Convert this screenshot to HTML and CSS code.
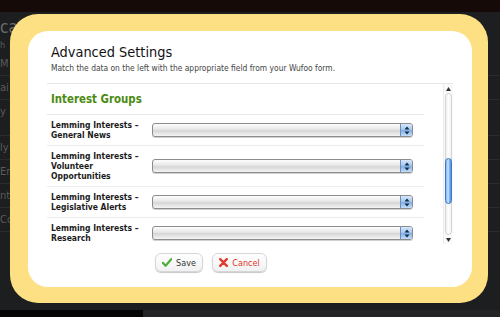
FILE: index.html
```html
<html>
    <head>
        <meta name="viewport" content="width=device-width, initial-scale=1">
        <link rel="stylesheet" href="styles.css">
    </head>

    <body>
        <div class="topbar"></div>
        <div class="page">
            <div class="page-title">cat</div>
            <div class="page-sub">h</div>
            <div class="page-row">M</div>
            <div class="page-row">ai</div>
            <div class="page-row tall">y</div>
            <div class="page-row">ly</div>
            <div class="page-row">En</div>
            <div class="page-row">nt</div>
            <div class="page-row">Co</div>
        </div>
        <div class="footbar"><div class="footbar-black"></div></div>

        <div class="modal">
            <div class="panel">
                <div class="header">
                    <h3>Advanced Settings</h3>
                    <p>Match the data on the left with the appropriate field from your Wufoo form.</p>
                </div>

                <div class="listbox">
                    <div class="list">
                        <div class="group">Interest Groups</div>

                        <div class="row">
                            <label>Lemming Interests &ndash;<br />General News</label>
                            <div class="select"><span class="arrows"><svg width="6" height="9" viewBox="0 0 6 9"><path d="M3 0.5 L5.5 3.5 H0.5 Z M3 8.5 L5.5 5.5 H0.5 Z" fill="#1a2a40"/></svg></span></div>
                        </div>
                        <div class="row">
                            <label>Lemming Interests &ndash;<br />Volunteer<br />Opportunities</label>
                            <div class="select"><span class="arrows"><svg width="6" height="9" viewBox="0 0 6 9"><path d="M3 0.5 L5.5 3.5 H0.5 Z M3 8.5 L5.5 5.5 H0.5 Z" fill="#1a2a40"/></svg></span></div>
                        </div>
                        <div class="row">
                            <label>Lemming Interests &ndash;<br />Legislative Alerts</label>
                            <div class="select"><span class="arrows"><svg width="6" height="9" viewBox="0 0 6 9"><path d="M3 0.5 L5.5 3.5 H0.5 Z M3 8.5 L5.5 5.5 H0.5 Z" fill="#1a2a40"/></svg></span></div>
                        </div>
                        <div class="row">
                            <label>Lemming Interests &ndash;<br />Research</label>
                            <div class="select"><span class="arrows"><svg width="6" height="9" viewBox="0 0 6 9"><path d="M3 0.5 L5.5 3.5 H0.5 Z M3 8.5 L5.5 5.5 H0.5 Z" fill="#1a2a40"/></svg></span></div>
                        </div>
                    </div>

                    <div class="scrollbar">
                        <div class="sb-arrow"><svg width="5" height="4" viewBox="0 0 5 4"><path d="M2.5 0 L5 4 H0 Z" fill="#333"/></svg></div>
                        <div class="sb-track">
                            <div class="sb-thumb"></div>
                        </div>
                        <div class="sb-arrow"><svg width="5" height="4" viewBox="0 0 5 4"><path d="M2.5 4 L5 0 H0 Z" fill="#333"/></svg></div>
                    </div>
                </div>

                <div class="buttons">
                    <button class="btn save">
                        <svg width="10" height="9" viewBox="0 0 10 9"><path d="M0.8 4.8 L3.6 7.8 L9.2 1.2" fill="none" stroke="#4fae3a" stroke-width="2.2" stroke-linecap="round" stroke-linejoin="round"/></svg>
                        Save
                    </button>
                    <button class="btn cancel">
                        <svg width="9" height="9" viewBox="0 0 9 9"><path d="M1.2 1.2 L7.8 7.8 M7.8 1.2 L1.2 7.8" fill="none" stroke="#e23a30" stroke-width="2.4" stroke-linecap="round"/></svg>
                        Cancel
                    </button>
                </div>
            </div>
        </div>
    </body>
</html>
```

FILE: styles.css
```css
* {
  box-sizing: border-box;
}

body {
  margin: 0;
  width: 500px;
  height: 317px;
  overflow: hidden;
  background-color: #1d1e1f;
  font-family: "DejaVu Sans Condensed", "DejaVu Sans", sans-serif;
  font-stretch: condensed;
  position: relative;
}

.topbar {
  height: 12px;
  background-color: #150a08;
}

/* page behind the overlay */
.page {
  color: #5a5a5a;
  font-size: 11px;
}

.page-title {
  font-size: 17px;
  line-height: 22px;
  margin-top: 4px;
  color: #6b6b6b;
}

.page-sub {
  font-size: 9px;
  line-height: 14px;
}

.page-row {
  height: 24px;
  line-height: 24px;
  border-bottom: 1px solid #2a2b2c;
}

.page-row.tall {
  height: 36px;
}

.footbar {
  position: absolute;
  left: 0;
  right: 0;
  bottom: 0;
  height: 7px;
  background-color: #232425;
}

.footbar-black {
  width: 143px;
  height: 7px;
  background-color: #050505;
}

/* modal */
.modal {
  position: absolute;
  left: 10px;
  top: 14px;
  width: 478px;
  height: 289px;
  padding: 17px 16px 16px 18px;
  background-color: #fde083;
  border-radius: 28px;
}

.panel {
  height: 100%;
  background-color: #fff;
  border-radius: 20px;
  padding: 12px 0 0 19px;
}

.header {
  padding-left: 4px;
  height: 40px;
}

.header h3 {
  margin: 0;
  font-size: 14.4px;
  line-height: 18px;
  font-weight: normal;
  color: #111;
}

.header p {
  margin: 2px 0 0 0;
  font-size: 8.4px;
  line-height: 10px;
  color: #444;
}

.listbox {
  width: 406px;
  height: 161px;
  border-top: 1px solid #e6e6e6;
  display: flex;
  overflow: hidden;
}

.list {
  width: 377px;
}

.group {
  height: 31px;
  padding: 8px 0 0 4px;
  font-size: 11.4px;
  line-height: 14px;
  font-weight: bold;
  color: #4b8b12;
  border-bottom: 1px solid #e8e8e8;
}

.row {
  display: flex;
  align-items: center;
  padding: 5px 0 5px 4px;
  border-bottom: 1px solid #ececec;
}

.row label {
  width: 101px;
  font-size: 8.5px;
  line-height: 10px;
  font-weight: bold;
  color: #1c1c1c;
}

.select {
  width: 261px;
  height: 14px;
  border: 1px solid #8c8c8c;
  border-radius: 3px;
  background: linear-gradient(#fdfdfd, #e6e6e6 45%, #d6d6d6 55%, #f4f4f4);
  display: flex;
  justify-content: flex-end;
  box-shadow: 0 1px 0 #d0d0d0;
}

.arrows {
  width: 12px;
  height: 12px;
  border-left: 1px solid #6f8db8;
  border-radius: 0 2px 2px 0;
  background: linear-gradient(#d7e8fb, #a6c9f1 45%, #7fb1ea 55%, #c6defa);
  display: flex;
  align-items: center;
  justify-content: center;
}

.scrollbar {
  margin-left: 19px;
  width: 10px;
  display: flex;
  flex-direction: column;
  background-color: #fafafa;
  border-left: 1px solid #ececec;
}

.sb-arrow {
  height: 9px;
  display: flex;
  align-items: center;
  justify-content: center;
}

.sb-track {
  flex: 1;
  margin: 0 1px;
  border: 1px solid #d4d4d4;
  border-radius: 5px;
  background: linear-gradient(90deg, #efefef, #fff 50%, #f2f2f2);
  padding-top: 64px;
}

.sb-thumb {
  height: 46px;
  margin: 0 -1px;
  border: 1px solid #3f74c4;
  border-radius: 5px;
  background: linear-gradient(90deg, #7fb3f0, #cfe6ff 45%, #8ec0f6 60%, #4f8fe0);
}

.buttons {
  display: flex;
  gap: 9px;
  padding: 9px 0 0 108px;
}

.btn {
  height: 19px;
  display: flex;
  align-items: center;
  justify-content: center;
  gap: 4px;
  padding: 0 4px;
  border: 1px solid #d6d6d6;
  border-radius: 6px;
  background: linear-gradient(#ffffff, #f1f1f1);
  box-shadow: 0 1px 1px #c8c8c8;
  font-family: "DejaVu Sans Condensed", "DejaVu Sans", sans-serif;
  font-stretch: condensed;
  font-size: 9px;
  cursor: pointer;
}

.btn svg {
  flex-shrink: 0;
}

.save {
  width: 48px;
  color: #333;
}

.cancel {
  width: 55px;
  color: #e0352b;
}
```
